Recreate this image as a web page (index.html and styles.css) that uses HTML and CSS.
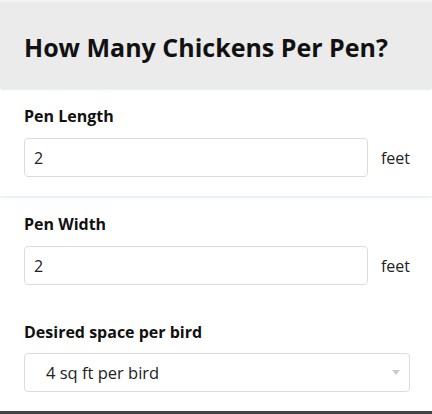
FILE: index.html
```html
<!DOCTYPE html>
<html lang="en">
<head>
    <meta charset="UTF-8">
    <meta name="viewport" content="width=device-width, initial-scale=1.0">
    <title>Chicken Calculator</title>
    <link rel="stylesheet" href="styles.css">
</head>
<body>
    <div class="calc">
        <div class="calc-header">
            <h1>How Many Chickens Per Pen?</h1>
        </div>
        <div class="calc-section first">
            <label class="field-label" for="pen-length">Pen Length</label>
            <div class="field-row">
                <input class="field-input" id="pen-length" type="text" value="2">
                <span class="field-unit">feet</span>
            </div>
        </div>
        <div class="calc-section">
            <label class="field-label" for="pen-width">Pen Width</label>
            <div class="field-row">
                <input class="field-input" id="pen-width" type="text" value="2">
                <span class="field-unit">feet</span>
            </div>
            <label class="field-label spaced" for="space">Desired space per bird</label>
            <div class="select-wrap">
                <select class="field-select" id="space">
                    <option>4 sq ft per bird</option>
                    <option>8 sq ft per bird</option>
                    <option>10 sq ft per bird</option>
                </select>
            </div>
        </div>
        <div class="calc-footer"></div>
    </div>
</body>
</html>
```

FILE: styles.css
```css
body {
    margin: 0;
    font-family: "Open Sans", Arial, sans-serif;
    background-color: #fff;
    color: #111;
}

.calc {
    width: 432px;
    height: 414px;
    overflow: hidden;
    display: flex;
    flex-direction: column;
}

.calc-header {
    background-color: #ebebeb;
    border-top: 2px solid #f3f3f3;
    height: 86px;
    padding: 0 24px;
    display: flex;
    align-items: center;
    box-shadow: 0 1px 3px rgba(120, 160, 200, 0.35);
    position: relative;
    z-index: 2;
}

.calc-header h1 {
    margin: 0;
    margin-top: 4px;
    font-size: 25px;
    font-weight: 700;
    color: #111;
}

.calc-section {
    padding: 16px 22px 0 24px;
    background-color: #fff;
}

.calc-section.first {
    height: 92px;
    box-shadow: 0 1px 3px rgba(120, 170, 210, 0.3);
    position: relative;
    z-index: 1;
}

.calc-section:not(.first) {
    padding-top: 16px;
    flex: 1;
}

.field-label {
    display: block;
    font-size: 16px;
    font-weight: 700;
    line-height: 24px;
    color: #111;
}

.field-label.spaced {
    margin-top: 35px;
}

.field-row {
    display: flex;
    align-items: center;
    margin-top: 10px;
    gap: 13px;
}

.field-input {
    width: 345px;
    height: 39px;
    box-sizing: border-box;
    border: 1px solid #dcdcdc;
    border-radius: 4px;
    padding: 0 9px;
    font-family: inherit;
    font-size: 16px;
    color: #222;
    background: #fff;
}

.field-unit {
    font-size: 16px;
    color: #222;
}

.select-wrap {
    position: relative;
    margin-top: 9px;
    width: 386px;
}

.select-wrap::after {
    content: "";
    position: absolute;
    right: 10px;
    top: 17px;
    border-left: 4px solid transparent;
    border-right: 4px solid transparent;
    border-top: 5px solid #ccc;
}

.field-select {
    width: 100%;
    height: 39px;
    box-sizing: border-box;
    border: 1px solid #dcdcdc;
    border-radius: 4px;
    padding: 0 21px;
    font-family: inherit;
    font-size: 16.5px;
    color: #222;
    background: #fff;
    appearance: none;
}

.calc-footer {
    height: 3px;
    background-color: #444;
}
```
